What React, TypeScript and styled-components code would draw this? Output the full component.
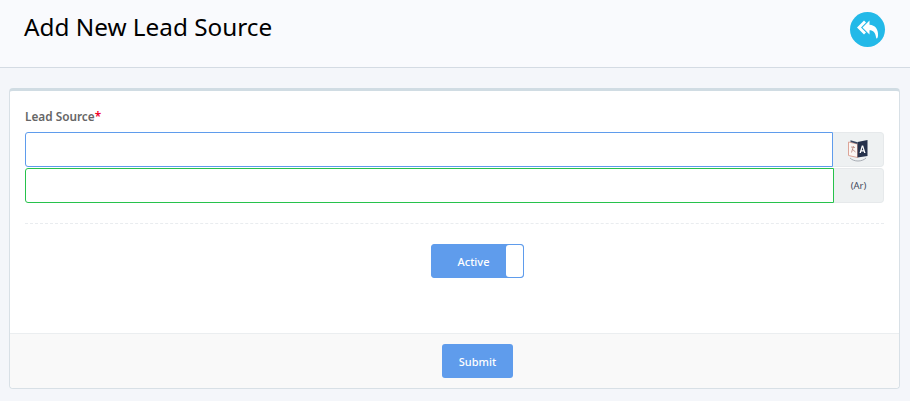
import React from "react";
import styled, { createGlobalStyle } from "styled-components";

const Global = createGlobalStyle`
  html, body { margin: 0; padding: 0; background: #f4f6fa; }
  body { font-family: "Noto Sans", "Open Sans", sans-serif; }
  * { box-sizing: border-box; }
`;

const Page = styled.div`
  width: 910px;
  height: 401px;
  overflow: hidden;
  background: #f4f6fa;
`;

const Header = styled.header`
  height: 68px;
  padding: 8px 25px 0 24px;
  background: #f9fafd;
  border-bottom: 1px solid #d4dbe3;
  display: flex;
  justify-content: space-between;
  align-items: flex-start;
`;

const Title = styled.h1`
  margin: 0;
  font-size: 24.3px;
  line-height: 38px;
  font-weight: 400;
  color: #000;
`;

const BackButton = styled.button`
  width: 35px;
  height: 35px;
  margin-top: 4px;
  padding: 0;
  border: 0;
  border-radius: 50%;
  background: #23b9e8;
  display: flex;
  align-items: center;
  justify-content: center;
`;

const Card = styled.section`
  margin: 20px 10px 0 9px;
  height: 301px;
  background: #fff;
  border: 1px solid #d8e0e6;
  border-top: 3px solid #d0dce3;
  border-radius: 4px;
  display: flex;
  flex-direction: column;
`;

const Body = styled.div`
  flex: 1;
  padding: 16px 15px 0 15px;
`;

const Label = styled.label`
  display: block;
  height: 25px;
  font-size: 11.8px;
  line-height: 18px;
  font-weight: 600;
  color: #666;
`;

const Star = styled.span`
  color: #f0002a;
`;

const Row = styled.div<{ $gap?: number }>`
  display: flex;
  height: 35px;
  margin-bottom: ${(p) => p.$gap ?? 0}px;
`;

const Input = styled.input<{ $color: string; $w: number }>`
  width: ${(p) => p.$w}px;
  height: 35px;
  padding: 0 10px;
  background: #fff;
  border: 1px solid ${(p) => p.$color};
  border-radius: 3px 0 0 3px;
  outline: none;
`;

const Addon = styled.div`
  flex: 1;
  height: 35px;
  background: #eef1f2;
  border: 1px solid #e6e9eb;
  border-left: 0;
  border-radius: 0 4px 4px 0;
  display: flex;
  align-items: center;
  justify-content: center;
  font-size: 9.5px;
  color: #3f4a5c;
`;

const Divider = styled.hr`
  margin: 20px 0 20px;
  border: 0;
  border-top: 1px dashed #e9ecef;
`;

const ToggleWrap = styled.div`
  display: flex;
  justify-content: center;
  padding-left: 46px;
`;

const Toggle = styled.div`
  width: 93px;
  height: 34px;
  background: #5f9cec;
  border: 1px solid #5f9cec;
  border-radius: 3px;
  display: flex;
  align-items: center;
  color: #fff;
  font-size: 11px;
  font-weight: 500;
`;

const ToggleLabel = styled.span`
  flex: 1;
  text-align: center;
  padding-left: 9px;
`;

const Knob = styled.span`
  width: 17px;
  height: 32px;
  background: #fff;
  border-radius: 3px;
`;

const Footer = styled.footer`
  height: 55px;
  padding: 10px 0 0 46px;
  background: #f9f9f9;
  border-top: 1px solid #ebeef0;
  border-radius: 0 0 4px 4px;
  display: flex;
  align-items: flex-start;
  justify-content: center;
`;

const Submit = styled.button`
  width: 71px;
  height: 34px;
  padding: 0;
  background: #5f9cec;
  border: 0;
  border-radius: 3px;
  color: #fff;
  font-family: inherit;
  font-size: 11px;
  font-weight: 500;
`;

const ReplyAllIcon = () => (
  <svg width="24" height="24" viewBox="0 0 24 24" fill="#fff">
    <path d="M8 2.5 L1 9.5 L8 16.5 L10 14.6 L5 9.5 L10 4.4 Z" />
    <path d="M13.5 2.5 L6.5 9.5 L13.5 16.5 L13.5 12.2 C17.3 12.2 19.3 14 20.2 20 C20.8 21.4 21.8 20 22 17.8 C22.5 11 19 7.2 13.5 6.8 Z" />
  </svg>
);

const TranslateIcon = () => (
  <svg width="24" height="26" viewBox="0 0 24 26">
    <path d="M2.5 5 L11.5 7 L11.5 20.5 L2.5 18.5 Z" fill="#fbf6f4" stroke="#dca598" strokeWidth="1" />
    <path d="M4.5 3.2 L11.5 5.2 L11.5 7 L4.5 5 Z" fill="#3a4660" />
    <path d="M11.5 5 L21.5 3 L21.5 19 L11.5 20.5 Z" fill="#26324c" />
    <path d="M13.5 16 L15.8 8.5 L17.2 8.5 L19.5 16 L18.1 16 L17.7 14.4 L15.3 14.4 L14.9 16 Z M15.7 13.2 L17.3 13.2 L16.5 10.2 Z" fill="#fff" />
    <path d="M5 10 L9 10.5 M7.5 9 L5.5 15.5 M6 12 L9.5 15" stroke="#b8847a" strokeWidth="0.8" fill="none" />
    <path d="M4 21 C8 25 16 25 20 21" stroke="#a8adb4" strokeWidth="1" fill="none" />
  </svg>
);

export default function App() {
  return (
    <Page>
      <Global />
      <Header>
        <Title>Add New Lead Source</Title>
        <BackButton aria-label="Back">
          <ReplyAllIcon />
        </BackButton>
      </Header>
      <Card>
        <Body>
          <Label>
            Lead Source<Star>*</Star>
          </Label>
          <Row $gap={1}>
            <Input $color="#5f9cec" $w={808} />
            <Addon>
              <TranslateIcon />
            </Addon>
          </Row>
          <Row>
            <Input $color="#27c24c" $w={809} />
            <Addon>(Ar)</Addon>
          </Row>
          <Divider />
          <ToggleWrap>
            <Toggle>
              <ToggleLabel>Active</ToggleLabel>
              <Knob />
            </Toggle>
          </ToggleWrap>
        </Body>
        <Footer>
          <Submit>Submit</Submit>
        </Footer>
      </Card>
    </Page>
  );
}
